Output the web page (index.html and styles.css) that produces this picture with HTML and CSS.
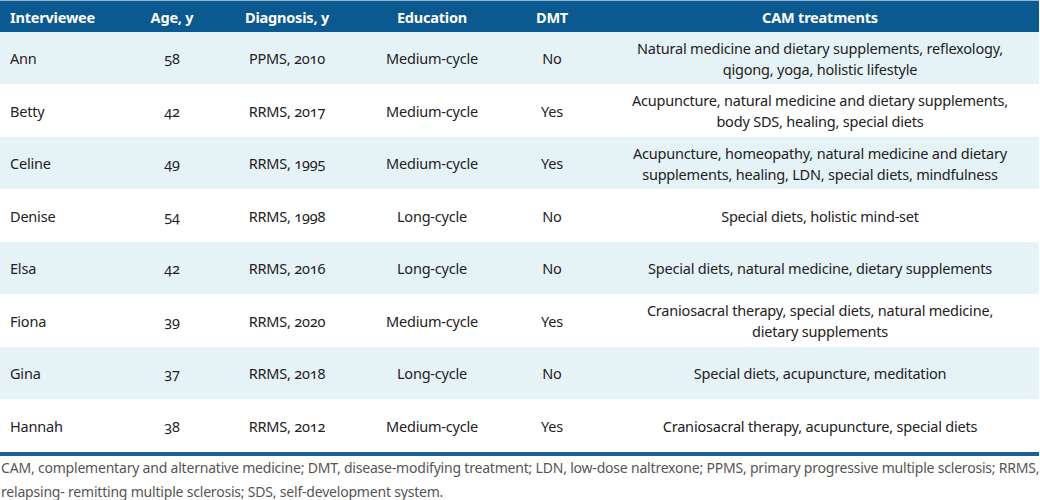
FILE: index.html
```html
<!DOCTYPE html>
<html>
<head>
<meta charset="utf-8">
<link rel="stylesheet" href="styles.css">
</head>
<body>
<div class="wrap">
<table class="tbl">
<colgroup>
<col class="c1"><col class="c2"><col class="c3"><col class="c4"><col class="c5"><col class="c6">
</colgroup>
<thead>
<tr><th class="left">Interviewee</th><th>Age, y</th><th>Diagnosis, y</th><th>Education</th><th>DMT</th><th>CAM treatments</th></tr>
</thead>
<tbody>
<tr class="alt"><td class="left">Ann</td><td>58</td><td>PPMS, 2010</td><td>Medium-cycle</td><td>No</td><td>Natural medicine and dietary supplements, reflexology,<br>qigong, yoga, holistic lifestyle</td></tr>
<tr><td class="left">Betty</td><td>42</td><td>RRMS, 2017</td><td>Medium-cycle</td><td>Yes</td><td>Acupuncture, natural medicine and dietary supplements,<br>body SDS, healing, special diets</td></tr>
<tr class="alt"><td class="left">Celine</td><td>49</td><td>RRMS, 1995</td><td>Medium-cycle</td><td>Yes</td><td>Acupuncture, homeopathy, natural medicine and dietary<br>supplements, healing, LDN, special diets, mindfulness</td></tr>
<tr><td class="left">Denise</td><td>54</td><td>RRMS, 1998</td><td>Long-cycle</td><td>No</td><td>Special diets, holistic mind-set</td></tr>
<tr class="alt"><td class="left">Elsa</td><td>42</td><td>RRMS, 2016</td><td>Long-cycle</td><td>No</td><td>Special diets, natural medicine, dietary supplements</td></tr>
<tr><td class="left">Fiona</td><td>39</td><td>RRMS, 2020</td><td>Medium-cycle</td><td>Yes</td><td>Craniosacral therapy, special diets, natural medicine,<br>dietary supplements</td></tr>
<tr class="alt"><td class="left">Gina</td><td>37</td><td>RRMS, 2018</td><td>Long-cycle</td><td>No</td><td>Special diets, acupuncture, meditation</td></tr>
<tr><td class="left">Hannah</td><td>38</td><td>RRMS, 2012</td><td>Medium-cycle</td><td>Yes</td><td>Craniosacral therapy, acupuncture, special diets</td></tr>
</tbody>
</table>
<p class="note">CAM, complementary and alternative medicine; DMT, disease-modifying treatment; LDN, low-dose naltrexone; PPMS, primary progressive multiple sclerosis; RRMS, relapsing- remitting multiple sclerosis; SDS, self-development system.</p>
</div>
</body>
</html>
```
FILE: styles.css
```css
html, body {
  margin: 0;
  padding: 0;
  background: #ffffff;
}
body {
  font-family: "Noto Sans", "Open Sans", sans-serif;
  font-variant-numeric: oldstyle-nums;
  color: #222222;
}
.wrap {
  width: 1040px;
}
.tbl {
  width: 1039px;
  border-collapse: collapse;
  table-layout: fixed;
  border-bottom: 4px solid #1d5f93;
}
.c1 { width: 131px; }
.c2 { width: 82px; }
.c3 { width: 148px; }
.c4 { width: 142px; }
.c5 { width: 98px; }
.c6 { width: 438px; }
.tbl th {
  background: #0b5991;
  color: #ffffff;
  font-weight: 700;
  font-size: 14.5px;
  height: 31px;
  padding: 0;
  border-top: 1px solid #9ab6cf;
  text-align: center;
  vertical-align: middle;
  letter-spacing: -0.2px;
}
.tbl td {
  font-size: 14.5px;
  line-height: 21px;
  height: 51px;
  padding: 1px 0 0 0;
  text-align: center;
  vertical-align: middle;
  letter-spacing: -0.2px;
}
.tbl tbody tr:nth-child(even) td {
  height: 52px;
}
.tbl .left {
  text-align: left;
  padding-left: 10px;
}
.tbl tr.alt td {
  background: #e6f3f6;
}
.note {
  margin: 0;
  padding: 0 0 0 1px;
  font-size: 14px;
  line-height: 24px;
  color: #555555;
  letter-spacing: -0.2px;
}
```
